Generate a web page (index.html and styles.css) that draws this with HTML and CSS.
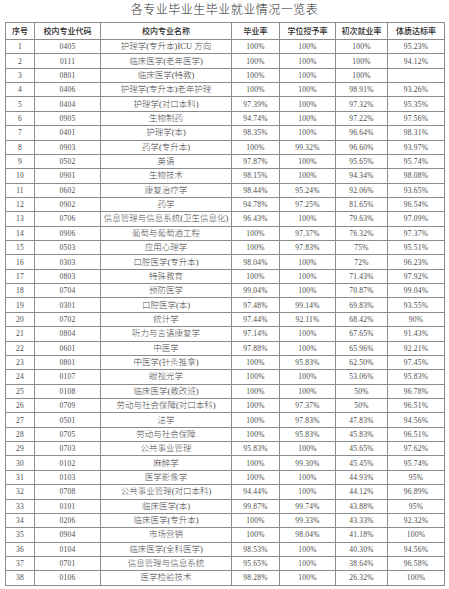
FILE: index.html
```html
<!DOCTYPE html>
<html lang="zh-CN">
<head>
<meta charset="utf-8">
<title>各专业毕业生毕业就业情况一览表</title>
<link rel="stylesheet" href="styles.css">
</head>
<body>
<h1 class="title">各专业毕业生毕业就业情况一览表</h1>
<table class="grid">
<colgroup>
<col class="c1"><col class="c2"><col class="c3"><col class="c4"><col class="c5"><col class="c6"><col class="c7">
</colgroup>
<thead>
<tr><th>序号</th><th>校内专业代码</th><th>校内专业名称</th><th>毕业率</th><th>学位授予率</th><th>初次就业率</th><th>体质达标率</th></tr>
</thead>
<tbody>
<tr><td class="n">1</td><td class="n">0405</td><td class="t">护理学(专升本)ICU 方向</td><td class="n">100%</td><td class="n">100%</td><td class="n">100%</td><td class="n">95.23%</td></tr>
<tr><td class="n">2</td><td class="n">0111</td><td class="t">临床医学(老年医学)</td><td class="n">100%</td><td class="n">100%</td><td class="n">100%</td><td class="n">94.12%</td></tr>
<tr><td class="n">3</td><td class="n">0801</td><td class="t">临床医学(特教)</td><td class="n">100%</td><td class="n">100%</td><td class="n">100%</td><td class="n"></td></tr>
<tr><td class="n">4</td><td class="n">0406</td><td class="t">护理学(专升本)老年护理</td><td class="n">100%</td><td class="n">100%</td><td class="n">98.91%</td><td class="n">93.26%</td></tr>
<tr><td class="n">5</td><td class="n">0404</td><td class="t">护理学(对口本科)</td><td class="n">97.39%</td><td class="n">100%</td><td class="n">97.32%</td><td class="n">95.35%</td></tr>
<tr><td class="n">6</td><td class="n">0905</td><td class="t">生物制药</td><td class="n">94.74%</td><td class="n">100%</td><td class="n">97.22%</td><td class="n">97.56%</td></tr>
<tr><td class="n">7</td><td class="n">0401</td><td class="t">护理学(本)</td><td class="n">98.35%</td><td class="n">100%</td><td class="n">96.64%</td><td class="n">98.31%</td></tr>
<tr><td class="n">8</td><td class="n">0903</td><td class="t">药学(专升本)</td><td class="n">100%</td><td class="n">99.32%</td><td class="n">96.60%</td><td class="n">93.97%</td></tr>
<tr><td class="n">9</td><td class="n">0502</td><td class="t">英语</td><td class="n">97.87%</td><td class="n">100%</td><td class="n">95.65%</td><td class="n">95.74%</td></tr>
<tr><td class="n">10</td><td class="n">0901</td><td class="t">生物技术</td><td class="n">98.15%</td><td class="n">100%</td><td class="n">94.34%</td><td class="n">98.08%</td></tr>
<tr><td class="n">11</td><td class="n">0602</td><td class="t">康复治疗学</td><td class="n">98.44%</td><td class="n">95.24%</td><td class="n">92.06%</td><td class="n">93.65%</td></tr>
<tr><td class="n">12</td><td class="n">0902</td><td class="t">药学</td><td class="n">94.78%</td><td class="n">97.25%</td><td class="n">81.65%</td><td class="n">96.54%</td></tr>
<tr><td class="n">13</td><td class="n">0706</td><td class="t">信息管理与信息系统(卫生信息化)</td><td class="n">96.43%</td><td class="n">100%</td><td class="n">79.63%</td><td class="n">97.09%</td></tr>
<tr><td class="n">14</td><td class="n">0906</td><td class="t">葡萄与葡萄酒工程</td><td class="n">100%</td><td class="n">97.37%</td><td class="n">76.32%</td><td class="n">97.37%</td></tr>
<tr><td class="n">15</td><td class="n">0503</td><td class="t">应用心理学</td><td class="n">100%</td><td class="n">97.83%</td><td class="n">75%</td><td class="n">95.51%</td></tr>
<tr><td class="n">16</td><td class="n">0303</td><td class="t">口腔医学(专升本)</td><td class="n">98.04%</td><td class="n">100%</td><td class="n">72%</td><td class="n">96.23%</td></tr>
<tr><td class="n">17</td><td class="n">0803</td><td class="t">特殊教育</td><td class="n">100%</td><td class="n">100%</td><td class="n">71.43%</td><td class="n">97.92%</td></tr>
<tr><td class="n">18</td><td class="n">0704</td><td class="t">预防医学</td><td class="n">99.04%</td><td class="n">100%</td><td class="n">70.87%</td><td class="n">99.04%</td></tr>
<tr><td class="n">19</td><td class="n">0301</td><td class="t">口腔医学(本)</td><td class="n">97.48%</td><td class="n">99.14%</td><td class="n">69.83%</td><td class="n">93.55%</td></tr>
<tr><td class="n">20</td><td class="n">0702</td><td class="t">统计学</td><td class="n">97.44%</td><td class="n">92.11%</td><td class="n">68.42%</td><td class="n">90%</td></tr>
<tr><td class="n">21</td><td class="n">0804</td><td class="t">听力与言语康复学</td><td class="n">97.14%</td><td class="n">100%</td><td class="n">67.65%</td><td class="n">91.43%</td></tr>
<tr><td class="n">22</td><td class="n">0601</td><td class="t">中医学</td><td class="n">97.88%</td><td class="n">100%</td><td class="n">65.96%</td><td class="n">92.21%</td></tr>
<tr><td class="n">23</td><td class="n">0801</td><td class="t">中医学(针灸推拿)</td><td class="n">100%</td><td class="n">95.83%</td><td class="n">62.50%</td><td class="n">97.45%</td></tr>
<tr><td class="n">24</td><td class="n">0107</td><td class="t">眼视光学</td><td class="n">100%</td><td class="n">100%</td><td class="n">53.06%</td><td class="n">95.83%</td></tr>
<tr><td class="n">25</td><td class="n">0108</td><td class="t">临床医学(教改班)</td><td class="n">100%</td><td class="n">100%</td><td class="n">50%</td><td class="n">96.78%</td></tr>
<tr><td class="n">26</td><td class="n">0709</td><td class="t">劳动与社会保障(对口本科)</td><td class="n">100%</td><td class="n">97.37%</td><td class="n">50%</td><td class="n">96.51%</td></tr>
<tr><td class="n">27</td><td class="n">0501</td><td class="t">法学</td><td class="n">100%</td><td class="n">97.83%</td><td class="n">47.83%</td><td class="n">94.56%</td></tr>
<tr><td class="n">28</td><td class="n">0705</td><td class="t">劳动与社会保障</td><td class="n">100%</td><td class="n">95.83%</td><td class="n">45.83%</td><td class="n">96.51%</td></tr>
<tr><td class="n">29</td><td class="n">0703</td><td class="t">公共事业管理</td><td class="n">95.83%</td><td class="n">100%</td><td class="n">45.65%</td><td class="n">97.62%</td></tr>
<tr><td class="n">30</td><td class="n">0102</td><td class="t">麻醉学</td><td class="n">100%</td><td class="n">99.30%</td><td class="n">45.45%</td><td class="n">95.74%</td></tr>
<tr><td class="n">31</td><td class="n">0103</td><td class="t">医学影像学</td><td class="n">100%</td><td class="n">100%</td><td class="n">44.93%</td><td class="n">95%</td></tr>
<tr><td class="n">32</td><td class="n">0708</td><td class="t">公共事业管理(对口本科)</td><td class="n">94.44%</td><td class="n">100%</td><td class="n">44.12%</td><td class="n">96.89%</td></tr>
<tr><td class="n">33</td><td class="n">0101</td><td class="t">临床医学(本)</td><td class="n">99.87%</td><td class="n">99.74%</td><td class="n">43.88%</td><td class="n">95%</td></tr>
<tr><td class="n">34</td><td class="n">0206</td><td class="t">临床医学(专升本)</td><td class="n">100%</td><td class="n">99.33%</td><td class="n">43.33%</td><td class="n">92.32%</td></tr>
<tr><td class="n">35</td><td class="n">0904</td><td class="t">市场营销</td><td class="n">100%</td><td class="n">98.04%</td><td class="n">41.18%</td><td class="n">100%</td></tr>
<tr><td class="n">36</td><td class="n">0104</td><td class="t">临床医学(全科医学)</td><td class="n">98.53%</td><td class="n">100%</td><td class="n">40.30%</td><td class="n">94.56%</td></tr>
<tr><td class="n">37</td><td class="n">0701</td><td class="t">信息管理与信息系统</td><td class="n">95.65%</td><td class="n">100%</td><td class="n">38.64%</td><td class="n">96.58%</td></tr>
<tr><td class="n">38</td><td class="n">0106</td><td class="t">医学检验技术</td><td class="n">98.28%</td><td class="n">100%</td><td class="n">26.32%</td><td class="n">100%</td></tr>
</tbody>
</table>
</body>
</html>
```
FILE: styles.css
```css
html, body {
  margin: 0;
  padding: 0;
  background: #fff;
}
body {
  width: 449px;
  font-family: "Liberation Serif", "Noto Sans CJK SC", serif;
  color: #4a4a4a;
}
.title {
  margin: 0;
  height: 22px;
  padding-top: 2px;
  box-sizing: border-box;
  font-family: "Noto Sans CJK SC", sans-serif;
  font-weight: 300;
  font-size: 12px;
  letter-spacing: 0.5px;
  line-height: 14px;
  text-align: center;
  color: #2a2a2a;
}
.grid {
  margin-left: 5px;
  width: 439px;
  border-collapse: collapse;
  table-layout: fixed;
}
.c1 { width: 29px; }
.c2 { width: 66px; }
.c3 { width: 131px; }
.c4 { width: 48px; }
.c5 { width: 56px; }
.c6 { width: 52px; }
.c7 { width: 57px; }
.grid th, .grid td {
  border: 1px solid #8c8c8c;
  padding: 0;
  text-align: center;
  white-space: nowrap;
  overflow: hidden;
}
.grid th {
  height: 16px;
  font-family: "Noto Sans CJK SC", sans-serif;
  font-weight: 500;
  font-size: 8px;
  line-height: 16px;
  color: #2a2a2a;
}
.grid td {
  height: 13.37px;
  line-height: 13px;
}
.grid td.n {
  font-size: 7.5px;
  letter-spacing: 0.2px;
}
.grid td.t {
  font-size: 8.5px;
  font-weight: 300;
}
```
